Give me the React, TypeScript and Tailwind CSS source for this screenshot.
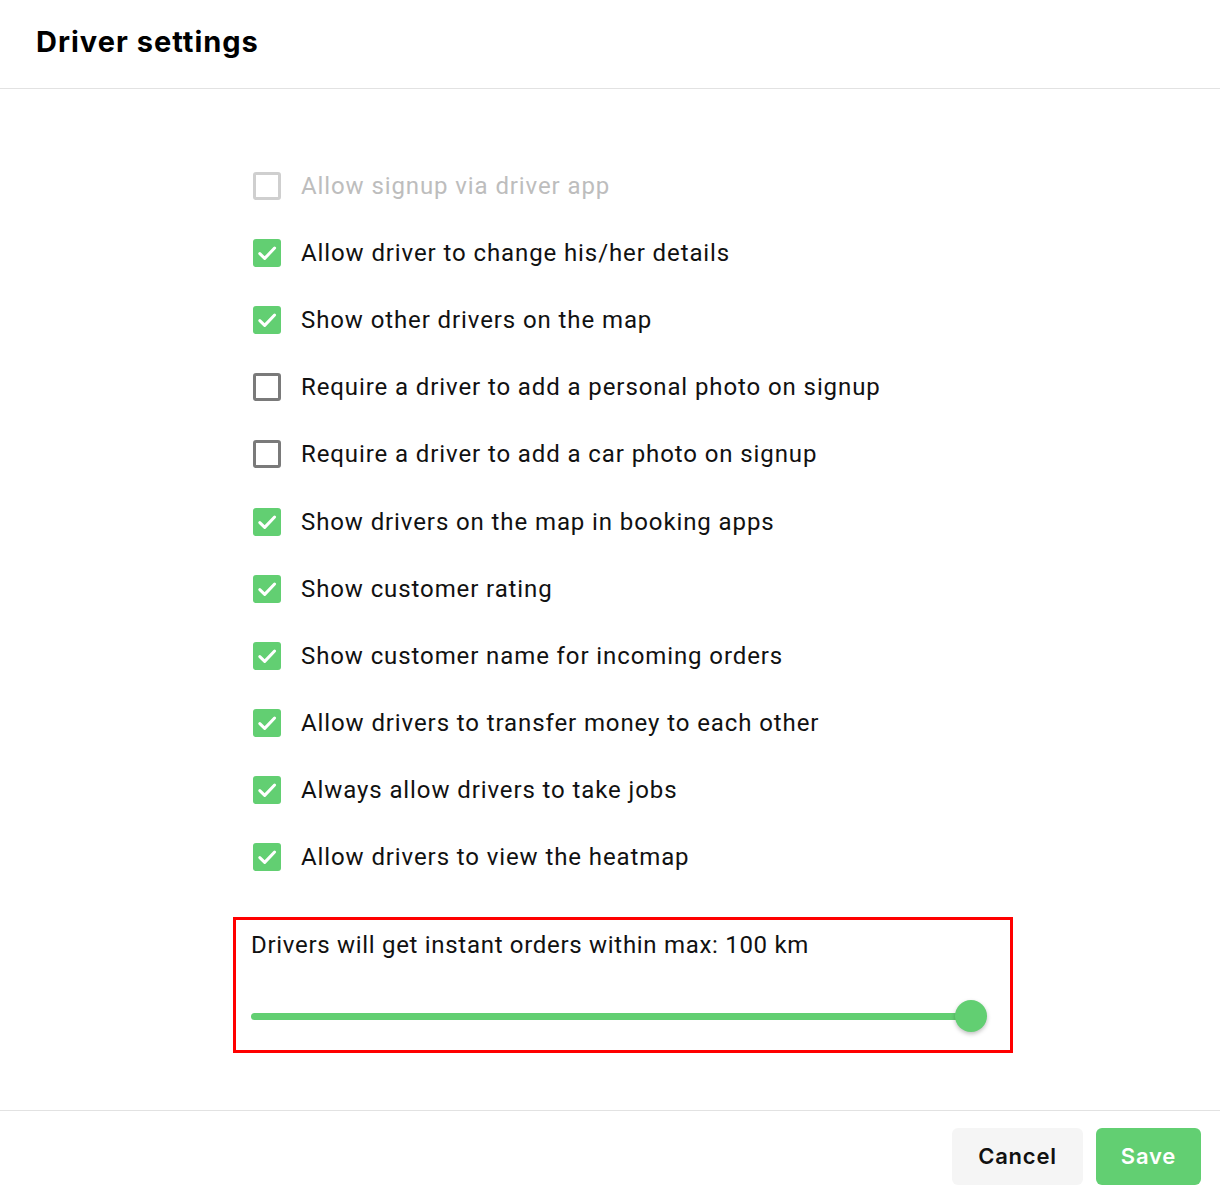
const items: { label: string; checked: boolean; disabled?: boolean }[] = [
  { label: "Allow signup via driver app", checked: false, disabled: true },
  { label: "Allow driver to change his/her details", checked: true },
  { label: "Show other drivers on the map", checked: true },
  { label: "Require a driver to add a personal photo on signup", checked: false },
  { label: "Require a driver to add a car photo on signup", checked: false },
  { label: "Show drivers on the map in booking apps", checked: true },
  { label: "Show customer rating", checked: true },
  { label: "Show customer name for incoming orders", checked: true },
  { label: "Allow drivers to transfer money to each other", checked: true },
  { label: "Always allow drivers to take jobs", checked: true },
  { label: "Allow drivers to view the heatmap", checked: true },
];

function Box({ checked, disabled }: { checked: boolean; disabled?: boolean }) {
  if (checked) {
    return (
      <span className="flex h-[28px] w-[28px] items-center justify-center rounded-[3px] bg-[#62cf72]">
        <svg width="22" height="22" viewBox="0 0 22 22" fill="none">
          <path d="M3.8 11.6l4.9 4.8L18.6 6" stroke="white" strokeWidth="3" strokeLinecap="round" strokeLinejoin="round" />
        </svg>
      </span>
    );
  }
  return (
    <span
      className={
        disabled
          ? "h-[28px] w-[28px] rounded-[3px] border-[3px] border-[#cfcfcf] bg-white"
          : "h-[28px] w-[28px] rounded-[3px] border-[3px] border-[#7a7a7a] bg-white"
      }
    />
  );
}

export default function App() {
  return (
    <div className="flex h-[1200px] w-[1220px] flex-col bg-white text-black">
      <div className="flex h-[89px] items-center border-b border-[#e2e2e2] pl-[36px] pb-[4px]">
        <h1 className="text-[29px] font-bold tracking-[1px] [font-family:Inter,sans-serif]">Driver settings</h1>
      </div>

      <div className="flex-1 pl-[233px] pt-[63px] [font-family:Roboto,sans-serif]">
        <div className="w-[780px]">
          {items.map((it) => (
            <div key={it.label} className="flex h-[67.2px] items-center pl-[20px]">
              <Box checked={it.checked} disabled={it.disabled} />
              <span
                className={
                  it.disabled
                    ? "ml-[20px] text-[24px] tracking-[0.9px] text-[#bdbdbd]"
                    : "ml-[20px] text-[24px] tracking-[0.9px] text-[#111]"
                }
              >
                {it.label}
              </span>
            </div>
          ))}

          <div className="mt-[26px] h-[136px] border-[3px] border-[#ff0000] px-[15px] pt-[11px]">
            <div className="text-[24px] leading-[28px] tracking-[0.7px] text-[#111]">
              Drivers will get instant orders within max: 100 km
            </div>
            <div className="relative mt-[41px] h-[32px]">
              <div className="absolute left-0 right-[23px] top-[12.5px] h-[7px] rounded-full bg-[#62cf72]" />
              <div className="absolute right-[8px] top-0 h-[32px] w-[32px] rounded-full bg-[#62cf72] shadow-[0_2px_4px_rgba(0,0,0,0.25)]" />
            </div>
          </div>
        </div>
      </div>

      <div className="flex h-[90px] items-start justify-end gap-[13px] border-t border-[#e2e2e2] pr-[19px] pt-[17px] [font-family:Inter,sans-serif]">
        <button className="h-[57px] w-[131px] rounded-[6px] bg-[#f5f5f5] text-[22px] font-semibold tracking-[0.8px] text-[#111]">
          Cancel
        </button>
        <button className="h-[57px] w-[105px] rounded-[6px] bg-[#62cf72] text-[22px] font-semibold tracking-[0.8px] text-white">
          Save
        </button>
      </div>
    </div>
  );
}
